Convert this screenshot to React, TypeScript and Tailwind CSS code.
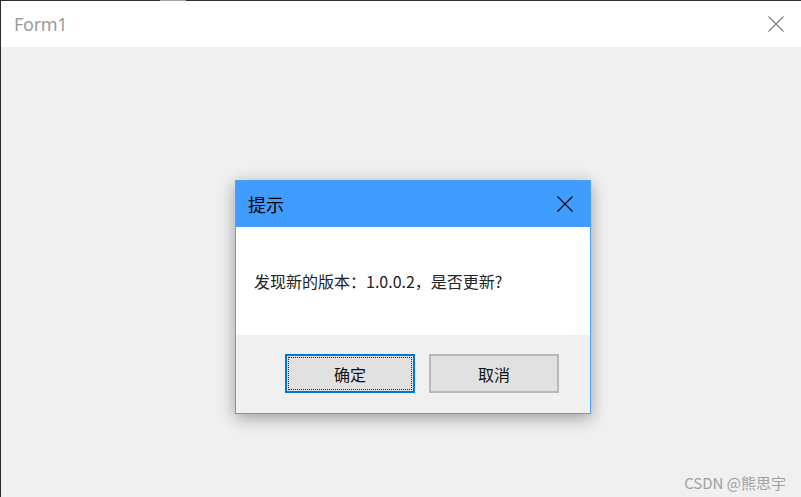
import React from "react";

function XIcon({ color, size = 16 }: { color: string; size?: number }) {
  return (
    <svg width={size} height={size} viewBox="0 0 16 16" fill="none">
      <path d="M0.5 0.5 L15.5 15.5 M15.5 0.5 L0.5 15.5" stroke={color} strokeWidth="1.1" />
    </svg>
  );
}

export default function App() {
  return (
    <div className="w-[801px] h-[497px] flex flex-col overflow-hidden font-['Noto_Sans','Noto_Sans_CJK_SC',sans-serif]">
      <div className="flex h-px shrink-0">
        <div className="w-[160px] bg-[#2b2b2b]" />
        <div className="w-[26px] bg-[#a3a3a3]" />
        <div className="flex-1 bg-[#2b2b2b]" />
      </div>
      <div className="flex-1 flex flex-col border-l border-[#2b2b2b]">
        <div className="h-[46px] shrink-0 bg-white flex items-center justify-between pl-[13px] pr-[17px]">
          <span className="text-[18px] leading-none text-[#9a9a9a] tracking-[-0.3px] font-['Noto_Sans',sans-serif]">
            Form1
          </span>
          <XIcon color="#7d7d7d" />
        </div>
        <div className="flex-1 bg-[#f0f0f0] relative">
          <div className="ml-[234px] mt-[133px] w-[356px] h-[234px] flex flex-col border border-[#4aa0fb] shadow-[0_4px_16px_rgba(0,0,0,0.35)]">
            <div className="h-[46px] shrink-0 bg-[#409dff] flex items-center justify-between pl-[12px] pr-[17px]">
              <span className="text-[18px] leading-none text-black font-['Noto_Sans_CJK_SC',sans-serif]">提示</span>
              <XIcon color="#000000" />
            </div>
            <div className="h-[108px] shrink-0 bg-white flex items-center pl-[18px]">
              <span className="text-[16px] leading-none text-[#222] font-['Noto_Sans_CJK_SC',sans-serif]">
                发现新的版本：1.0.0.2，是否更新?
              </span>
            </div>
            <div className="flex-1 bg-[#f0f0f0] flex items-start pt-[19px] pl-[49px] gap-[14px]">
              <div className="w-[130px] h-[39px] border-2 border-[#0078d7] bg-[#e1e1e1] p-px">
                <div className="w-full h-full border border-dotted border-[#222] flex items-center justify-center">
                  <span className="text-[16px] leading-none text-[#111] font-['Noto_Sans_CJK_SC',sans-serif]">确定</span>
                </div>
              </div>
              <div className="w-[130px] h-[39px] border-2 border-[#b9b9b9] bg-[#e1e1e1] flex items-center justify-center">
                <span className="text-[16px] leading-none text-[#111] font-['Noto_Sans_CJK_SC',sans-serif]">取消</span>
              </div>
            </div>
          </div>
          <div className="absolute right-[15px] bottom-[7px] text-[15px] leading-none text-[#a0a0a0] font-['Noto_Sans_CJK_SC',sans-serif]">
            CSDN @熊思宇
          </div>
        </div>
      </div>
    </div>
  );
}
